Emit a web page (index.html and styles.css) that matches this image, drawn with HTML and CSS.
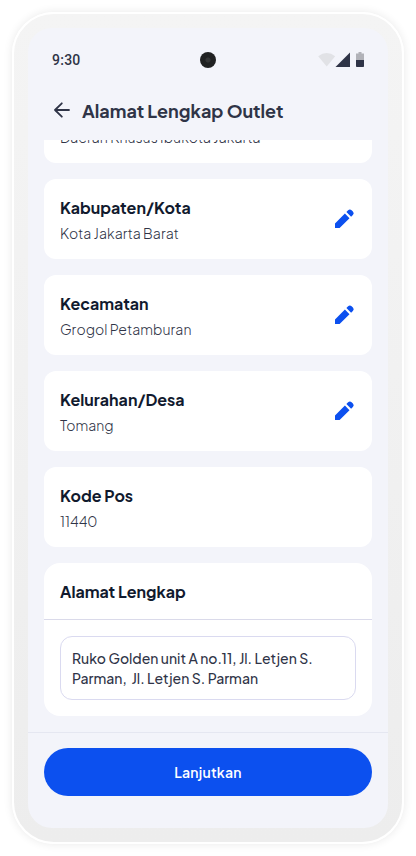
FILE: index.html
```
<!DOCTYPE html>
<html lang="id">
<head>
<meta charset="utf-8">
<title>Alamat Lengkap Outlet</title>
<link rel="stylesheet" href="styles.css">
</head>
<body>
<svg class="defs" width="0" height="0"><symbol id="pencil" viewBox="0 0 24 24"><path d="M3 16.400V20.900h4.600L17.500 11.200l-4.600-4.600zM20.900 8.100a2.500 2.500 0 0 0 0-3.500l-1.300-1.300a2.500 2.500 0 0 0-3.500 0L14.400 5.100l4.700 4.700z"/></symbol></svg>
<div class="phone">
  <div class="screen">
    <div class="status">
      <span class="time">9:30</span>
      <span class="camera"></span>
      <svg class="signals" width="48" height="16" viewBox="0 0 48 16"><path d="M.2 4.2Q8.700-2.400 17.200 4.200L8.700 14.500z" fill="#e1e2e6"/><path d="M17.500 15L32 .5V15z" fill="#2f3447"/><path d="M40.500 0h3v1.500H46v6.500h-8V1.500h2.500z" fill="#b1b2b8"/><path d="M38 8h8v6.200q0 .8-.8.8h-6.400q-.8 0-.8-.8z" fill="#2f3447"/></svg>
    </div>
    <header class="header">
      <svg class="back" width="16" height="16" viewBox="0 0 16 16"><path d="M15 8H1M7.800 1.300L1 8l6.800 6.700"/></svg>
      <h1>Alamat Lengkap Outlet</h1>
    </header>
    <main class="list">
      <section class="card card-clipped"><p>Daerah Khusus Ibukota Jakarta</p></section>
      <section class="card"><div><h2>Kabupaten/Kota</h2><p>Kota Jakarta Barat</p></div><svg class="edit"><use href="#pencil"/></svg></section>
      <section class="card"><div><h2>Kecamatan</h2><p>Grogol Petamburan</p></div><svg class="edit"><use href="#pencil"/></svg></section>
      <section class="card"><div><h2>Kelurahan/Desa</h2><p>Tomang</p></div><svg class="edit"><use href="#pencil"/></svg></section>
      <section class="card"><div><h2>Kode Pos</h2><p>11440</p></div></section>
      <section class="address">
        <h2>Alamat Lengkap</h2>
        <div class="address-body"><div class="field">Ruko Golden unit A no.11, Jl. Letjen S.<br>Parman,&nbsp; Jl. Letjen S. Parman</div></div>
      </section>
    </main>
    <footer class="footer"><button>Lanjutkan</button></footer>
  </div>
</div>
</body>
</html>
```
FILE: styles.css
```
* { box-sizing: border-box; }
body { margin: 0; height: 856px; padding: 12px; background: #fff; font-family: "Plus Jakarta Sans", Inter, sans-serif; overflow: hidden; }
.defs { position: absolute; }
h1, h2, p { margin: 0; white-space: nowrap; }
.phone { width: 392px; height: 832px; padding: 14px; border: 2px solid #fff; border-radius: 42px; background: linear-gradient(#f4f4f4, #ededed); box-shadow: 0 0 10px rgba(0,0,0,.09); }
.screen { width: 360px; height: 800px; border-radius: 24px; background: #f3f4fa; overflow: hidden; display: flex; flex-direction: column; }
.status { height: 52px; padding: 11px 24px 0; display: grid; grid-template-columns: 1fr 16px 1fr; align-items: center; }
.time { font: 500 14px/20px Roboto, sans-serif; color: #2f3447; letter-spacing: .25px; }
.camera { width: 16px; height: 16px; border-radius: 50%; background: radial-gradient(circle, #343536 0 2px, #202122 3px); }
.signals { justify-self: end; margin-right: -2px; }
.header { height: 60px; display: flex; align-items: center; padding: 1px 0 1px 26px; }
.back { fill: none; stroke: #2f3447; stroke-width: 1.8; stroke-linecap: round; stroke-linejoin: round; margin-right: 12px; }
h1 { font-size: 18px; line-height: 24px; font-weight: 700; color: #2f3447; margin-top: 2px; }
.list { height: 592px; flex: none; overflow: hidden; padding: 0 16px 16px; display: flex; flex-direction: column; justify-content: flex-end; gap: 16px; }
.card { flex: none; height: 80px; border-radius: 12px; background: #fff; padding: 17px 16px 15px; display: flex; justify-content: space-between; align-items: flex-start; }
.card-clipped { align-items: flex-end; padding-bottom: 16px; }
h2 { font-size: 16px; line-height: 24px; font-weight: 700; color: #111a2e; }
p { font-size: 14px; line-height: 20px; margin-top: 3px; font-weight: 300; letter-spacing: .03px; color: #2f3447; }
.edit { width: 24px; height: 24px; fill: #0c50ef; margin-top: 11px; }
.address { flex: none; height: 153px; border-radius: 16px; background: #fff; }
.address h2 { height: 57px; padding: 17px 16px 15px; border-bottom: 1px solid #dadaea; }
.address-body { padding: 16px; }
.field { height: 64px; border: 1px solid #dadaf0; border-radius: 12px; padding: 11px; font-size: 14px; line-height: 20px; font-weight: 500; color: #2f3447; white-space: nowrap; }
.footer { flex: 1; border-top: 1px solid #e5e7f1; padding: 15px 16px 0; }
button { display: block; width: 100%; height: 48px; border: 0; border-radius: 24px; background: #0c50ef; color: #fff; letter-spacing: .25px; font: 600 14px/20px "Plus Jakarta Sans", Inter, sans-serif; }
```
